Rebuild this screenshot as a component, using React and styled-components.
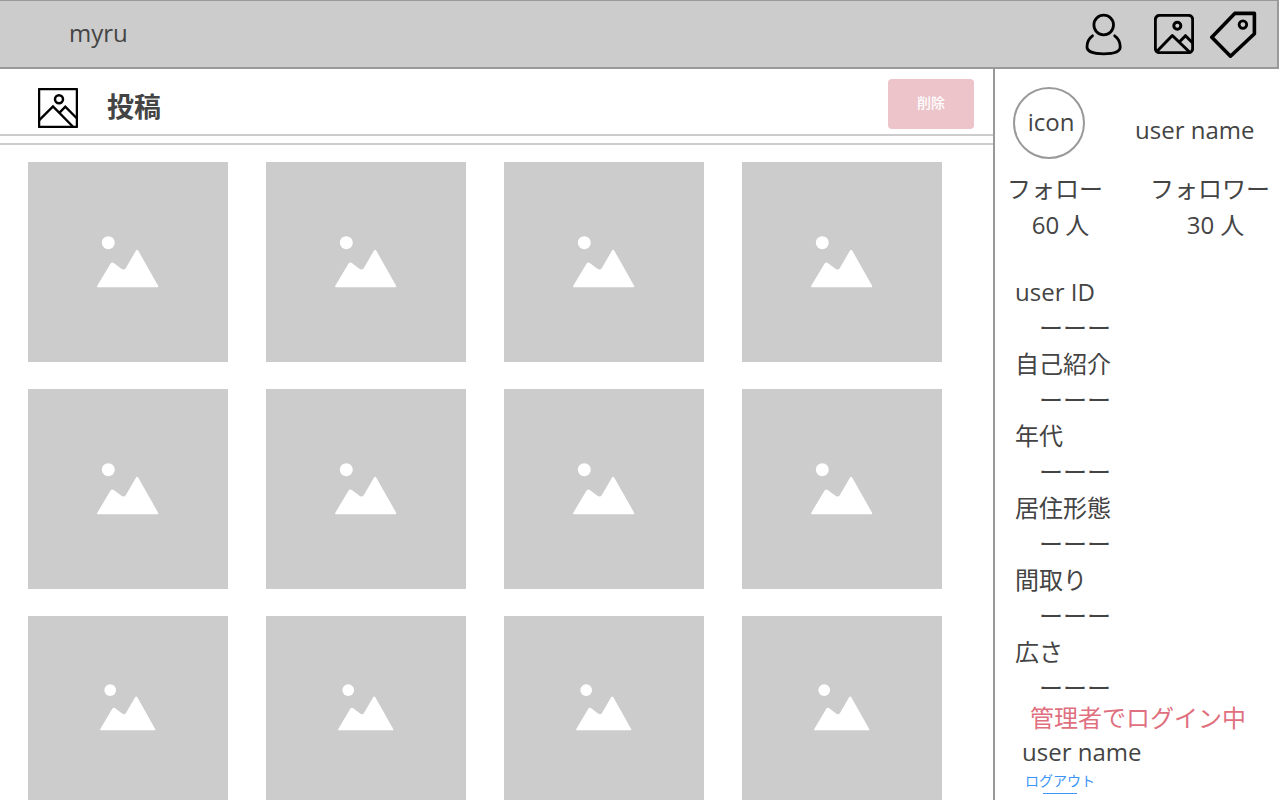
import React from "react";
import styled, { createGlobalStyle } from "styled-components";

const GlobalStyle = createGlobalStyle`
  *, *::before, *::after { box-sizing: border-box; }
  body {
    margin: 0;
    background: #fff;
    color: #444;
    font-family: "Open Sans", "Noto Sans CJK JP", sans-serif;
    font-size: 24px;
    line-height: 36px;
  }
  h1, h2, p, dl, dt, dd { margin: 0; }
`;

const Shell = styled.div`
  display: flex;
  flex-direction: column;
  min-height: 100vh;
`;

const Header = styled.header`
  display: flex;
  align-items: center;
  justify-content: space-between;
  height: 69px;
  margin-right: 1px;
  padding: 0 19px 0 69px;
  background: #ccc;
  border: solid #999;
  border-width: 1px 2px 2px 0;
`;

const Brand = styled.h1`
  padding-bottom: 2px;
  font-size: 24px;
  font-weight: 400;
`;

const Nav = styled.nav`
  display: flex;
  align-items: center;
`;

const NavLink = styled.a`
  display: flex;
  color: #000;
  margin-left: ${(p) => p.$gap || 0}px;
`;

const Icon = styled.svg`
  display: block;
  fill: none;
  stroke: currentColor;
  stroke-width: 3;
  stroke-linecap: round;
  stroke-linejoin: round;
`;

const Body = styled.div`
  display: flex;
  flex: 1;
`;

const Main = styled.main`
  display: flex;
  flex-direction: column;
  flex: 1;
  min-width: 0;
`;

const TitleBar = styled.div`
  display: flex;
  align-items: center;
  height: 76px;
  padding: 4px 19px 0 38px;
  border-bottom: 2px solid #ccc;
  background: linear-gradient(#ccc, #ccc) 0 65px / 100% 2px no-repeat;
  color: #000;
`;

const Title = styled.h2`
  flex: 1;
  margin-left: 29px;
  padding-bottom: 2px;
  color: #444;
  font-size: 27px;
  font-weight: 700;
`;

const DeleteButton = styled.button`
  align-self: flex-start;
  width: 86px;
  height: 50px;
  margin-top: 6px;
  padding: 0 0 3px;
  border: 0;
  border-radius: 4px;
  background: #ecc4ca;
  color: #fff;
  font: 500 14px/20px "Open Sans", "Noto Sans CJK JP", sans-serif;
`;

const Gallery = styled.section`
  display: grid;
  flex: 1;
  grid-template-columns: repeat(4, 1fr);
  grid-template-rows: 200px 200px minmax(184px, 1fr);
  gap: 27px 38px;
  padding: 17px 51px 0 28px;
`;

const Tile = styled.div`
  display: flex;
  align-items: center;
  justify-content: center;
  background: #ccc;
`;

const Sidebar = styled.aside`
  width: 287px;
  border-left: 2px solid #999;
`;

const Profile = styled.div`
  display: flex;
  padding: 18px 0 0 18px;
`;

const Avatar = styled.div`
  display: flex;
  align-items: center;
  justify-content: center;
  width: 72px;
  height: 72px;
  padding: 0 0 2px 4px;
  border: 2px solid #999;
  border-radius: 50%;
`;

const ProfileName = styled.p`
  margin: 25px 0 0 50px;
`;

const Stats = styled.dl`
  display: flex;
  justify-content: space-between;
  padding: 12px 10px 0 12px;
`;

const StatValue = styled.dd`
  text-align: center;
  padding-left: 11px;
`;

const Details = styled.dl`
  padding: 31px 0 0 20px;
`;

const DetailValue = styled.dd`
  padding-left: 24px;
`;

const Session = styled.div`
  padding-left: 27px;
  line-height: 34px;
`;

const AdminNotice = styled.p`
  margin-bottom: 5px;
  padding-left: 8px;
  color: #e07080;
  line-height: 24px;
  white-space: nowrap;
`;

const Logout = styled.a`
  display: flex;
  flex-direction: column;
  align-items: center;
  width: max-content;
  margin: 0 0 0 3px;
  color: #3d94f6;
  font-size: 14px;
  line-height: 24px;
  text-decoration: none;

  &::after {
    content: "";
    width: 34px;
    height: 1px;
    background: currentColor;
  }
`;

const PersonIcon = () => (
  <Icon width="38" height="44" viewBox="0 0 38 44" aria-hidden="true">
    <circle cx="18.7" cy="13" r="9.8" strokeWidth="2.8" />
    <path strokeWidth="2.8" d="M7.5 23.8C4 26.2 2 30.5 2 35c0 4.5 7 6.8 16.7 6.8S35.2 39.5 35.2 35c0-4.5-2-8.8-5.5-11.2" />
  </Icon>
);

const RoundedImageIcon = () => (
  <Icon width="40" height="40" viewBox="0 0 40 40" aria-hidden="true">
    <rect x="1.3" y="1.3" width="37.4" height="37.4" rx="4.5" />
    <circle cx="23.3" cy="11.7" r="3.5" />
    <path d="M2.8 37.5 18.3 21.5 35.5 38M25.3 28l6.2-6.3 7 7" />
  </Icon>
);

const TagIcon = () => (
  <Icon width="48" height="48" viewBox="1 -1 48 48" aria-hidden="true">
    <path d="M2.8 26.3 25.7 2.4 45.4 2.4 45.4 22.8 21.5 45.3Z" strokeWidth="3.6" />
    <circle cx="33.9" cy="13.6" r="3.8" strokeWidth="2.8" />
  </Icon>
);

const SquareImageIcon = () => (
  <Icon width="40" height="40" viewBox="0 0 40 40" aria-hidden="true">
    <rect x="1.1" y="1.1" width="37.8" height="37.8" strokeWidth="2.3" />
    <circle cx="21" cy="11.2" r="4" strokeWidth="2.5" />
    <path strokeWidth="2.4" strokeLinecap="butt" strokeLinejoin="miter" d="M1 32.3 15 18.5 34.8 38.5M21.3 24.8l6-6.2L39 30.5" />
  </Icon>
);

const Placeholder = ({ width }) => (
  <svg width={width} viewBox="0 0 62 53" fill="#fff" aria-hidden="true">
    <circle cx="11.3" cy="6.7" r="6.5" />
    <path d="M.9 51.2Q-.4 51.2.3 49.7L13.6 27.5Q14.9 25.7 16.8 26.9L24.1 32.5Q26.8 34.7 28.6 32.5L38.9 14.7Q40.1 13 41.3 14.7L61.1 49.7Q61.6 51.2 60.6 51.2Z" />
  </svg>
);

const iconWidths = [62, 62, 56];
const details = ["user ID", "自己紹介", "年代", "居住形態", "間取り", "広さ"];

export default function App() {
  return (
    <Shell>
      <GlobalStyle />
      <Header>
        <Brand>myru</Brand>
        <Nav>
          <NavLink href="#user" aria-label="ユーザー"><PersonIcon /></NavLink>
          <NavLink href="#posts" aria-label="投稿" $gap={31}><RoundedImageIcon /></NavLink>
          <NavLink href="#tags" aria-label="タグ" $gap={16}><TagIcon /></NavLink>
        </Nav>
      </Header>
      <Body>
        <Main>
          <TitleBar>
            <SquareImageIcon />
            <Title>投稿</Title>
            <DeleteButton type="button">削除</DeleteButton>
          </TitleBar>
          <Gallery>
            {iconWidths.map((width, row) =>
              [0, 1, 2, 3].map((col) => (
                <Tile key={`${row}-${col}`}><Placeholder width={width} /></Tile>
              ))
            )}
          </Gallery>
        </Main>
        <Sidebar>
          <Profile>
            <Avatar>icon</Avatar>
            <ProfileName>user name</ProfileName>
          </Profile>
          <Stats>
            <div>
              <dt>フォロー</dt>
              <StatValue>60 人</StatValue>
            </div>
            <div>
              <dt>フォロワー</dt>
              <StatValue>30 人</StatValue>
            </div>
          </Stats>
          <Details>
            {details.map((label) => (
              <React.Fragment key={label}>
                <dt>{label}</dt>
                <DetailValue>ーーー</DetailValue>
              </React.Fragment>
            ))}
          </Details>
          <Session>
            <AdminNotice>管理者でログイン中</AdminNotice>
            <p>user name</p>
            <Logout href="#logout">ログアウト</Logout>
          </Session>
        </Sidebar>
      </Body>
    </Shell>
  );
}
